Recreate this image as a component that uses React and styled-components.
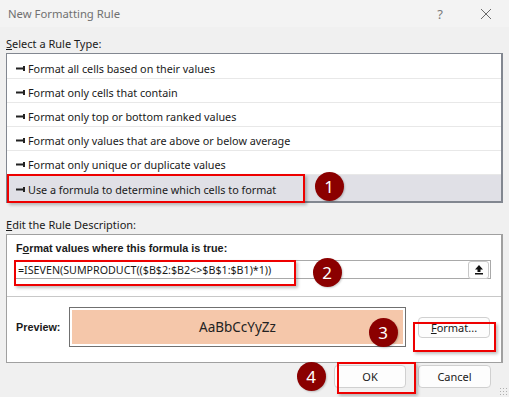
import React from "react";
import styled, { createGlobalStyle } from "styled-components";

const GlobalStyle = createGlobalStyle`
  html, body {
    margin: 0;
    padding: 0;
    background: #f0f0f0;
  }
  body {
    font-family: "Noto Sans", "Open Sans", sans-serif;
    font-size: 11px;
    color: #1a1a1a;
  }
`;

const Dialog = styled.div`
  position: relative;
  width: 509px;
  height: 397px;
  background: #f0f0f0;
  overflow: hidden;
`;

const TitleBar = styled.div`
  display: flex;
  align-items: center;
  height: 27px;
  padding-left: 8px;
  background: #f3f3f3;
  color: #707070;
  font-size: 11.3px;
`;

const Title = styled.div`
  flex: 1;
`;

const TitleButton = styled.div`
  width: 46px;
  display: flex;
  justify-content: center;
  color: #7a7a7a;
  font-size: 13px;
`;

const Body = styled.div`
  padding: 0 6px;
`;

const SectionLabel = styled.div`
  height: ${(p) => p.$h}px;
  display: flex;
  align-items: flex-end;
  padding-bottom: 2px;
  box-sizing: border-box;
  font-size: 11px;
  u {
    text-decoration: underline;
  }
`;

const ListBox = styled.div`
  display: flex;
  flex-direction: column;
  border: 1px solid #828790;
  border-right-width: 2px;
  border-bottom-width: 2px;
  padding-top: 1px;
  background: #fff;
  height: 150px;
  box-sizing: border-box;
`;

const Row = styled.div`
  display: flex;
  align-items: center;
  gap: 2px;
  flex: ${(p) => (p.$selected ? 1 : "0 0 24px")};
  padding: 4px 0 0 9px;
  border-bottom: 1px solid ${(p) => (p.$selected ? "transparent" : "#e8e8e8")};
  background: ${(p) => (p.$selected ? "#e0e0e6" : "#fff")};
  box-sizing: border-box;
  font-size: 10.8px;
`;

const DescBox = styled.div`
  border: 1px solid #a0a0a0;
  border-right-width: 2px;
  background: #fff;
  height: 129px;
  box-sizing: border-box;
`;

const BoldLabel = styled.div`
  font-family: "Liberation Sans", Arial, sans-serif;
  font-weight: 700;
  font-size: 10.8px;
  flex: ${(p) => (p.$w ? `0 0 ${p.$w}px` : "none")};
  padding: ${(p) => p.$pad || "0"};
  u {
    text-decoration: underline;
  }
`;

const FormulaRow = styled.div`
  display: flex;
  align-items: center;
  height: 19px;
  margin: 6px 10px 0 7px;
  border: 1px solid #a9a9a9;
  padding: 0 1px 0 3px;
  box-sizing: border-box;
`;

const FormulaText = styled.div`
  flex: 1;
  font-size: 10.7px;
`;

const CollapseButton = styled.div`
  width: 19px;
  height: 16px;
  border: 1px solid #c8c8c8;
  border-radius: 3px;
  display: flex;
  align-items: center;
  justify-content: center;
  background: #fdfdfd;
`;

const Separator = styled.div`
  height: 1px;
  background: #c8c8c8;
  margin-top: 17px;
`;

const PreviewRow = styled.div`
  display: flex;
  align-items: center;
  height: 60px;
  padding-left: 9px;
`;

const PreviewFrame = styled.div`
  width: 337px;
  height: 40px;
  border: 1px solid #707070;
  padding: 2px;
  box-sizing: border-box;
  background: #fff;
`;

const PreviewFill = styled.div`
  height: 100%;
  background: #f5c7aa;
  display: flex;
  align-items: center;
  justify-content: center;
  font-size: 13.5px;
  color: #222;
`;

const Button = styled.div`
  width: ${(p) => p.$w}px;
  height: ${(p) => p.$h}px;
  margin-left: ${(p) => p.$ml || 0}px;
  border: 1px solid #d0d0d0;
  border-radius: 4px;
  background: #fdfdfd;
  display: flex;
  align-items: center;
  justify-content: center;
  box-sizing: border-box;
  color: #1a1a1a;
  font-size: 11px;
  u {
    text-decoration: underline;
  }
`;

const Footer = styled.div`
  display: flex;
  justify-content: flex-end;
  padding: 2px 12px 0 0;
`;

const RedBox = styled.div`
  position: absolute;
  border: 2px solid #ee0000;
  box-shadow: 2px 2px 3px rgba(0, 0, 0, 0.25);
  box-sizing: border-box;
  pointer-events: none;
`;

const Badge = styled.div`
  position: absolute;
  width: 29px;
  height: 29px;
  margin: -14.5px 0 0 -14.5px;
  border-radius: 50%;
  background: #8b0000;
  color: #fff;
  font-size: 17px;
  display: flex;
  align-items: center;
  justify-content: center;
  box-shadow: 1px 1px 2px rgba(0, 0, 0, 0.2);
`;

const Grip = styled.div`
  position: absolute;
  right: 2px;
  bottom: 2px;
  width: 8px;
  height: 8px;
  background-image: radial-gradient(#b0b0b0 0.8px, transparent 1px);
  background-size: 3px 3px;
`;

const Bullet = () => (
  <svg width="10" height="7" viewBox="0 0 10 7">
    <rect x="0" y="2.5" width="8" height="2" fill="#222" />
    <rect x="7" y="1" width="2" height="5" fill="#222" />
  </svg>
);

const rules = [
  "Format all cells based on their values",
  "Format only cells that contain",
  "Format only top or bottom ranked values",
  "Format only values that are above or below average",
  "Format only unique or duplicate values",
  "Use a formula to determine which cells to format",
];

const annotations = [
  { n: 1, x: 329, y: 186 },
  { n: 2, x: 327, y: 272 },
  { n: 3, x: 383, y: 332 },
  { n: 4, x: 311, y: 376 },
];

const boxes = [
  { l: 7, t: 174, w: 298, h: 29 },
  { l: 14, t: 260, w: 282, h: 26 },
  { l: 413, t: 322, w: 83, h: 30 },
  { l: 337, t: 362, w: 79, h: 32 },
];

export default function App() {
  return (
    <Dialog>
      <GlobalStyle />
      <TitleBar>
        <Title>New Formatting Rule</Title>
        <TitleButton>?</TitleButton>
        <TitleButton>
          <svg width="12" height="12" viewBox="0 0 12 12">
            <path d="M1 1L11 11M11 1L1 11" stroke="#6a6a6a" strokeWidth="1" />
          </svg>
        </TitleButton>
      </TitleBar>
      <Body>
        <SectionLabel $h={26}>
          <span>
            <u>S</u>elect a Rule Type:
          </span>
        </SectionLabel>
        <ListBox>
          {rules.map((r, i) => (
            <Row key={r} $selected={i === rules.length - 1}>
              <Bullet />
              <span>{r}</span>
            </Row>
          ))}
        </ListBox>
        <SectionLabel $h={31}>
          <span>
            <u>E</u>dit the Rule Description:
          </span>
        </SectionLabel>
        <DescBox>
          <BoldLabel $pad="7px 0 0 9px">
            F<u>o</u>rmat values where this formula is true:
          </BoldLabel>
          <FormulaRow>
            <FormulaText>=ISEVEN(SUMPRODUCT(($B$2:$B2&lt;&gt;$B$1:$B1)*1))</FormulaText>
            <CollapseButton>
              <svg width="10" height="11" viewBox="0 0 10 11">
                <path d="M5 1L1 5.5H3.5V8H6.5V5.5H9Z" fill="#111" />
                <rect x="1" y="9" width="8" height="1.5" fill="#111" />
              </svg>
            </CollapseButton>
          </FormulaRow>
          <Separator />
          <PreviewRow>
            <BoldLabel $w={53}>Preview:</BoldLabel>
            <PreviewFrame>
              <PreviewFill>AaBbCcYyZz</PreviewFill>
            </PreviewFrame>
            <Button $w={72} $h={21} $ml={12}>
              <span>
                <u>F</u>ormat...
              </span>
            </Button>
          </PreviewRow>
        </DescBox>
        <Footer>
          <Button $w={72} $h={23}>OK</Button>
          <Button $w={73} $h={23} $ml={12}>
            Cancel
          </Button>
        </Footer>
      </Body>
      {boxes.map((b, i) => (
        <RedBox key={i} style={{ left: b.l, top: b.t, width: b.w, height: b.h }} />
      ))}
      {annotations.map((a) => (
        <Badge key={a.n} style={{ left: a.x, top: a.y }}>
          {a.n}
        </Badge>
      ))}
      <Grip />
    </Dialog>
  );
}
